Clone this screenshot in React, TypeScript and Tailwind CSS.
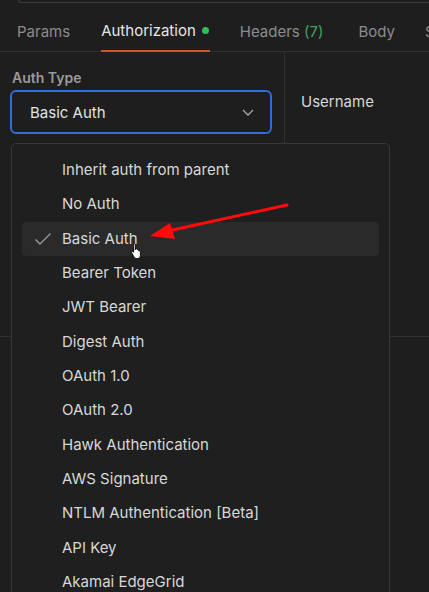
import React from "react";

const items = [
  "Inherit auth from parent",
  "No Auth",
  "Basic Auth",
  "Bearer Token",
  "JWT Bearer",
  "Digest Auth",
  "OAuth 1.0",
  "OAuth 2.0",
  "Hawk Authentication",
  "AWS Signature",
  "NTLM Authentication [Beta]",
  "API Key",
  "Akamai EdgeGrid",
];

const Tabs = () => (
  <div className="flex items-end h-[49px] border-b border-[#303030] text-[15px] whitespace-nowrap">
    <div className="shrink-0 px-[17px] pb-[8px] text-[#8c8c8c]">Params</div>
    <div className="shrink-0 ml-[14px] pb-[8px] border-b-2 border-[#c9562e] -mb-px flex items-center gap-[6px] text-[#e6e6e6]">
      Authorization
      <span className="w-[7px] h-[7px] rounded-full bg-[#2fbf57] mr-[1px]" />
    </div>
    <div className="shrink-0 ml-[30px] pb-[8px] text-[#8c8c8c]">
      Headers <span className="text-[#3fa45f]">(7)</span>
    </div>
    <div className="shrink-0 ml-[35px] pb-[8px] text-[#8c8c8c]">Body</div>
    <div className="shrink-0 ml-[30px] pb-[8px] text-[#8c8c8c]">S</div>
  </div>
);

export default function App() {
  return (
    <div
      className="w-[429px] h-[592px] overflow-hidden bg-[#1e1e1e] relative"
      style={{ fontFamily: "Inter, 'Noto Sans', sans-serif" }}
    >
      <div className="h-[3px] ml-[18px] border-l border-b border-[#3a3a3a] rounded-bl-[5px]" />
      <Tabs />
      <div className="flex h-[285px] border-b border-[#303030]">
        <div className="w-[285px] border-r border-[#303030] px-[10px] pt-[16px]">
          <div className="text-[14px] font-semibold text-[#9a9a9a] pl-[2px] leading-[20px]">Auth Type</div>
          <div className="mt-[2px] h-[44px] w-[262px] rounded-[6px] border-2 border-[#2f6cd8] flex items-center justify-between pl-[18px] pr-[16px]">
            <span className="text-[15px] text-[#e2e2e2] pt-[2px]">Basic Auth</span>
            <svg width="12" height="7" viewBox="0 0 12 7" fill="none">
              <path d="M1 1l5 5 5-5" stroke="#a8a8a8" strokeWidth="1.3" />
            </svg>
          </div>
        </div>
        <div className="flex-1 pl-[16px] pt-[40px] text-[15px] text-[#d6d6d6] leading-[20px]">Username</div>
      </div>

      {/* dropdown menu */}
      <div className="absolute left-[11px] top-[143px] w-[379px] h-[470px] rounded-[5px] border border-[#383838] bg-[#1f1f1f] pt-[9px] px-[10px]">
        {items.map((label) => {
          const active = label === "Basic Auth";
          return (
            <div
              key={label}
              className={`h-[34.33px] flex items-center rounded-[4px] text-[15px] text-[#d8d8d8] whitespace-nowrap ${
                active ? "bg-[#2a2a2a]" : ""
              }`}
            >
              <span className="w-[40px] flex justify-center pl-[2px]">
                {active && (
                  <svg width="18" height="14" viewBox="0 0 18 14" fill="none">
                    <path d="M1.5 7.5l4.5 4.5L16.5 1.5" stroke="#9a9a9a" strokeWidth="1.4" />
                  </svg>
                )}
              </span>
              {label}
            </div>
          );
        })}
      </div>

      {/* annotation arrow */}
      <svg className="absolute left-0 top-0 pointer-events-none" width="429" height="592">
        <line x1="287" y1="205" x2="168" y2="231" stroke="#ff0b0b" strokeWidth="3" strokeLinecap="round" />
        <polygon points="150,236 170,223 175,239" fill="#ff0b0b" />
      </svg>

      {/* hand cursor */}
      <svg className="absolute left-[130px] top-[242px]" width="14" height="16" viewBox="0 0 14 16">
        <path
          d="M4 1.5c.8 0 1.3.5 1.3 1.3v5l.1-1.4c.7-.4 1.5 0 1.6.7l.1.6c.6-.5 1.5-.2 1.6.6l.1.7c.7-.4 1.6 0 1.6.8v3.6c0 1.8-1.3 3.1-3.1 3.1H6.4c-1 0-1.8-.5-2.3-1.3L1.6 10.6c-.4-.7.4-1.5 1.1-1.1l.9.7V2.8C3.6 2 3.2 1.5 4 1.5z"
          fill="#fff"
          stroke="#000"
          strokeWidth="0.9"
        />
      </svg>
    </div>
  );
}
